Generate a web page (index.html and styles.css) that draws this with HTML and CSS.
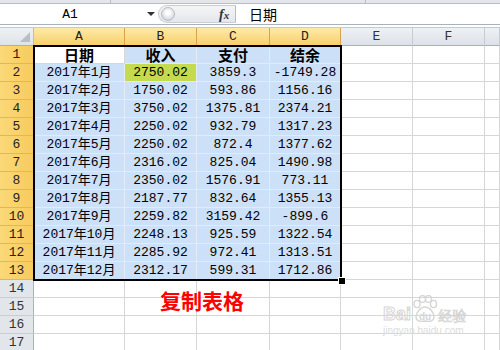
FILE: index.html
```html
<!DOCTYPE html>
<html lang="zh">
<head>
<meta charset="utf-8">
<link rel="stylesheet" href="styles.css">
</head>
<body>
<div class="app">
  <div class="topstrip"><span class="tdiv t1"></span><span class="tdiv t2"></span></div>
  <div class="fbar">
    <div class="namebox"><span class="ref">A1</span><span class="arrow"></span></div>
    <div class="pill"><span class="knob"></span><span class="fx">f<span class="fxx">x</span></span></div>
    <div class="finput">日期</div>
  </div>
  <div class="fsep"></div>
  <div class="sheet">
    <div class="c corner"><span class="tri"></span></div>
    <div class="c ch hs">A</div><div class="c ch hs">B</div><div class="c ch hs">C</div><div class="c ch hs">D</div>
    <div class="c ch">E</div><div class="c ch">F</div><div class="c ch last"></div>

    <div class="c rh hs">1</div><div class="c act th">日期</div><div class="c sel th">收入</div><div class="c sel th">支付</div><div class="c sel th">结余</div><div class="c"></div><div class="c"></div><div class="c"></div>
    <div class="c rh hs">2</div><div class="c sel">2017年1月</div><div class="c hl">2750.02</div><div class="c sel">3859.3</div><div class="c sel">-1749.28</div><div class="c"></div><div class="c"></div><div class="c"></div>
    <div class="c rh hs">3</div><div class="c sel">2017年2月</div><div class="c sel">1750.02</div><div class="c sel">593.86</div><div class="c sel">1156.16</div><div class="c"></div><div class="c"></div><div class="c"></div>
    <div class="c rh hs">4</div><div class="c sel">2017年3月</div><div class="c sel">3750.02</div><div class="c sel">1375.81</div><div class="c sel">2374.21</div><div class="c"></div><div class="c"></div><div class="c"></div>
    <div class="c rh hs">5</div><div class="c sel">2017年4月</div><div class="c sel">2250.02</div><div class="c sel">932.79</div><div class="c sel">1317.23</div><div class="c"></div><div class="c"></div><div class="c"></div>
    <div class="c rh hs">6</div><div class="c sel">2017年5月</div><div class="c sel">2250.02</div><div class="c sel">872.4</div><div class="c sel">1377.62</div><div class="c"></div><div class="c"></div><div class="c"></div>
    <div class="c rh hs">7</div><div class="c sel">2017年6月</div><div class="c sel">2316.02</div><div class="c sel">825.04</div><div class="c sel">1490.98</div><div class="c"></div><div class="c"></div><div class="c"></div>
    <div class="c rh hs">8</div><div class="c sel">2017年7月</div><div class="c sel">2350.02</div><div class="c sel">1576.91</div><div class="c sel">773.11</div><div class="c"></div><div class="c"></div><div class="c"></div>
    <div class="c rh hs">9</div><div class="c sel">2017年8月</div><div class="c sel">2187.77</div><div class="c sel">832.64</div><div class="c sel">1355.13</div><div class="c"></div><div class="c"></div><div class="c"></div>
    <div class="c rh hs">10</div><div class="c sel">2017年9月</div><div class="c sel">2259.82</div><div class="c sel">3159.42</div><div class="c sel">-899.6</div><div class="c"></div><div class="c"></div><div class="c"></div>
    <div class="c rh hs">11</div><div class="c sel">2017年10月</div><div class="c sel">2248.13</div><div class="c sel">925.59</div><div class="c sel">1322.54</div><div class="c"></div><div class="c"></div><div class="c"></div>
    <div class="c rh hs">12</div><div class="c sel">2017年11月</div><div class="c sel">2285.92</div><div class="c sel">972.41</div><div class="c sel">1313.51</div><div class="c"></div><div class="c"></div><div class="c"></div>
    <div class="c rh hs">13</div><div class="c sel">2017年12月</div><div class="c sel">2312.17</div><div class="c sel">599.31</div><div class="c sel">1712.86</div><div class="c"></div><div class="c"></div><div class="c"></div>
    <div class="c rh">14</div><div class="c"></div><div class="c"></div><div class="c"></div><div class="c"></div><div class="c"></div><div class="c"></div><div class="c"></div>
    <div class="c rh">15</div><div class="c"></div><div class="c"></div><div class="c"></div><div class="c"></div><div class="c"></div><div class="c"></div><div class="c"></div>
    <div class="c rh">16</div><div class="c"></div><div class="c"></div><div class="c"></div><div class="c"></div><div class="c"></div><div class="c"></div><div class="c"></div>
    <div class="c rh">17</div><div class="c"></div><div class="c"></div><div class="c"></div><div class="c"></div><div class="c"></div><div class="c"></div><div class="c"></div>

    <div class="selection"></div>
    <div class="handle"></div>
    <div class="note">复制表格</div>
    <div class="wm">
      <div class="wm-top"><span class="wm-bai">Bai</span><span class="wm-paw"><svg width="26" height="28" viewBox="0 0 26 28"><g fill="none" stroke="#d6d6d6" stroke-width="1.4"><ellipse cx="5" cy="9" rx="3" ry="3.6"/><ellipse cx="10.5" cy="4" rx="3" ry="3.4"/><ellipse cx="16.5" cy="4" rx="3" ry="3.4"/><ellipse cx="21.5" cy="9" rx="3" ry="3.6"/><path d="M13 12 C8 12 4 18 4 22 C4 26 8 27 13 26 C18 27 22 26 22 22 C22 18 18 12 13 12 Z"/></g><text x="13" y="25" text-anchor="middle" font-size="10" font-family="Liberation Sans, sans-serif" font-weight="bold" fill="#d6d6d6">du</text></svg></span><span class="wm-jy">经验</span></div>
      <div class="wm-url">jingyan.baidu.com</div>
    </div>
  </div>
</div>
</body>
</html>
```
FILE: styles.css
```css
html, body {
  margin: 0;
  padding: 0;
  background: #fff;
}
.app {
  width: 500px;
  height: 350px;
  overflow: hidden;
  position: relative;
  font-family: "Liberation Mono", "Noto Sans CJK SC", monospace;
}
.topstrip {
  height: 3px;
  background: #e3e7ec;
  border-bottom: 1px solid #b6bdc6;
  position: relative;
}
.tdiv {
  position: absolute;
  top: 0;
  width: 1px;
  height: 3px;
  background: #b6bdc6;
}
.t1 { left: 110px; }
.t2 { left: 365px; }
.fbar {
  height: 20px;
  display: flex;
  align-items: stretch;
  background: #fff;
  border-bottom: 1px solid #a9b1bb;
}
.namebox {
  width: 158px;
  position: relative;
  display: flex;
  align-items: center;
  justify-content: center;
  font-size: 13px;
  color: #000;
}
.ref {
  margin-left: -18px;
}
.arrow {
  position: absolute;
  left: 147px;
  top: 8px;
  width: 0;
  height: 0;
  border-left: 4px solid transparent;
  border-right: 4px solid transparent;
  border-top: 4px solid #333;
}
.pill {
  width: 78px;
  margin: 1px 0;
  background: linear-gradient(#f4f5f7, #e4e7eb);
  border-radius: 10px 0 0 10px;
  border: 1px solid #c9ced5;
  border-right: 1px solid #b5bcc5;
  box-sizing: border-box;
  position: relative;
}
.knob {
  position: absolute;
  left: 2px;
  top: 1px;
  width: 14px;
  height: 14px;
  border-radius: 50%;
  background: radial-gradient(circle at 50% 40%, #fdfdfd 20%, #d3d7dc 75%, #b9bec5 100%);
  border: 1px solid #b7bdc5;
  box-sizing: border-box;
}
.fx {
  position: absolute;
  left: 60px;
  top: 0;
  font-family: "Liberation Serif", serif;
  font-style: italic;
  font-weight: bold;
  font-size: 14px;
  line-height: 17px;
  color: #333;
}
.fxx {
  font-size: 11px;
}
.finput {
  flex: 1;
  padding-left: 13px;
  display: flex;
  align-items: center;
  font-size: 14px;
  line-height: 16px;
  font-family: "Noto Sans CJK SC", sans-serif;
  color: #000;
}
.fsep {
  height: 2px;
  background: #fff;
  border-bottom: 1px solid #c4cad2;
}
.sheet {
  position: relative;
  display: grid;
  grid-template-columns: 34px 91px 72px 73px 71px 72px 72px 1fr;
  grid-auto-rows: 18px;
}
.c {
  box-sizing: border-box;
  border-right: 1px solid #d6d6d6;
  border-bottom: 1px solid #d6d6d6;
  display: flex;
  align-items: center;
  justify-content: center;
  font-size: 13px;
  line-height: 17px;
  color: #000;
  white-space: nowrap;
}
.corner {
  background: linear-gradient(#eef1f4, #dfe3e8);
  border-right: 1px solid #b6bec8;
  border-bottom: 1px solid #a7b0bb;
  position: relative;
}
.tri {
  position: absolute;
  right: 3px;
  bottom: 3px;
  width: 0;
  height: 0;
  border-left: 10px solid transparent;
  border-bottom: 10px solid #b8bfc7;
}
.ch {
  background: linear-gradient(#eef1f4, #dde2e7);
  border-right: 1px solid #c6ccd3;
  border-bottom: 1px solid #a7b0bb;
  color: #333;
}
.ch.hs {
  background: linear-gradient(#fdeaa8, #f8d06c);
  border-right: 1px solid #dba24c;
  border-bottom: 1px solid #cf9843;
  color: #222;
}
.rh {
  background: #e2e6eb;
  border-right: 1px solid #a9b2bd;
  border-bottom: 1px solid #c9ced5;
  color: #333;
}
.rh.hs {
  background: linear-gradient(90deg, #fbd978, #f7cb5e);
  border-right: 1px solid #d49a44;
  border-bottom: 1px solid #e6b45a;
  color: #222;
}
.sel {
  background: #cce0f7;
  border-right-color: #e3ebf5;
  border-bottom-color: #e3ebf5;
}
.act {
  background: #fff;
}
.hl {
  background: #c6da50;
  border-right-color: #e3ebf5;
  border-bottom-color: #e3ebf5;
}
.th {
  font-family: "Noto Sans CJK SC", sans-serif;
  font-weight: bold;
  font-size: 15px;
  line-height: 17px;
}
.selection {
  position: absolute;
  left: 33px;
  top: 17px;
  width: 309px;
  height: 236px;
  border: 2px solid #000;
  box-sizing: border-box;
  pointer-events: none;
}
.handle {
  position: absolute;
  left: 338px;
  top: 249px;
  width: 6px;
  height: 6px;
  background: #000;
  border: 1px solid #fff;
}
.note {
  position: absolute;
  left: 160px;
  top: 260px;
  font-family: "Noto Sans CJK SC", sans-serif;
  font-weight: bold;
  font-size: 21px;
  line-height: 24px;
  color: #f00;
}
.wm {
  position: absolute;
  left: 383px;
  top: 267px;
  width: 92px;
  display: flex;
  flex-direction: column;
  align-items: flex-start;
  color: #d6d6d6;
}
.wm-top {
  display: flex;
  align-items: flex-end;
  height: 28px;
}
.wm-bai {
  font-family: "Liberation Sans", sans-serif;
  font-weight: bold;
  font-size: 18px;
  line-height: 18px;
  color: transparent;
  -webkit-text-stroke: 1px #d6d6d6;
}
.wm-paw {
  display: flex;
  margin-left: 1px;
}
.wm-jy {
  font-family: "Noto Sans CJK SC", sans-serif;
  font-size: 14px;
  line-height: 16px;
  color: transparent;
  -webkit-text-stroke: 0.7px #d2d2d2;
}
.wm-url {
  font-family: "Liberation Sans", sans-serif;
  font-size: 10px;
  line-height: 14px;
  color: #dcdcdc;
  margin-top: 1px;
}
```
